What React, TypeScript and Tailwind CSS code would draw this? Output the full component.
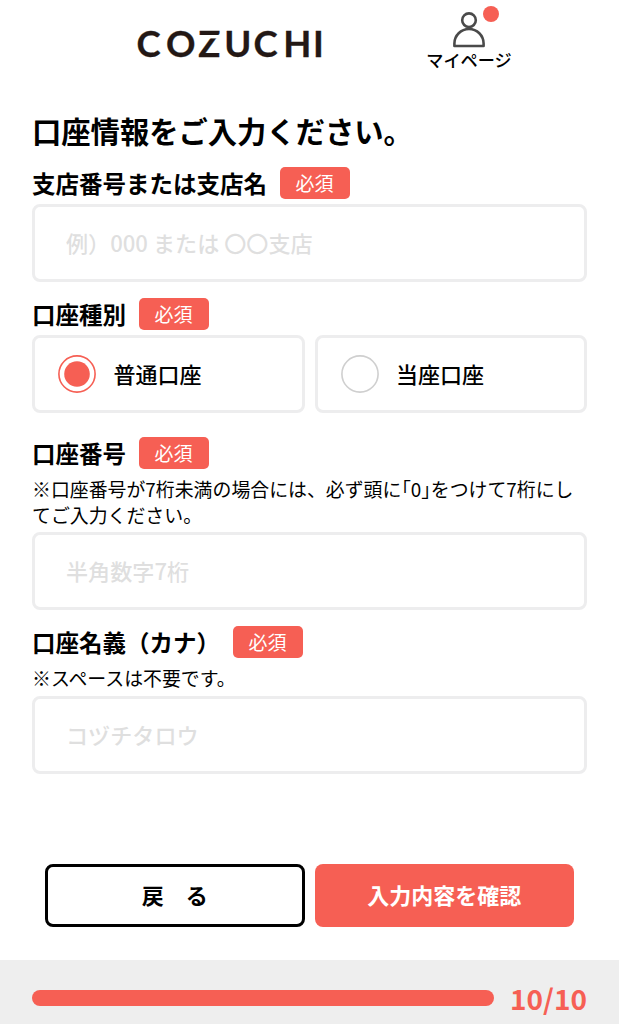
import { useState, type ReactNode } from 'react';

type AccountType = 'ordinary' | 'current';

const accountTypes: { value: AccountType; label: string }[] = [
  { value: 'ordinary', label: '普通口座' },
  { value: 'current', label: '当座口座' },
];

function Logo() {
  return (
    <svg className="h-12 w-[200px]" viewBox="0 0 200 48" role="img" aria-label="COZUCHI">
      <text
        x="6.4 35.9 68.2 94.2 123.6 153.3 183"
        y="37.2"
        className="fill-[#231815] stroke-[#231815] font-['Lato',sans-serif] text-[36.5px] font-bold [stroke-width:0.3px]"
      >
        COZUCHI
      </text>
      {/* gap under the top bar of the Z */}
      <rect x="68" y="15" width="24" height="3.4" fill="#fff" />
    </svg>
  );
}

function MyPageLink() {
  return (
    <a href="#" className="relative flex w-[88px] flex-col items-center">
      <svg className="h-[38px] w-9" viewBox="0 0 36 38" fill="none" stroke="#4a4a4a" strokeWidth="2.6">
        <circle cx="18" cy="10.2" r="6.8" />
        <path d="M3.4 36V33.6a14.6 14.6 0 0 1 29.2 0V36Z" strokeLinejoin="round" />
      </svg>
      <span className="absolute top-[-4px] right-[14px] size-4 rounded-full bg-[#f65f54]" />
      <span className="text-[17.2px] leading-6 font-medium whitespace-nowrap">マイページ</span>
    </a>
  );
}

function FieldLabel({ children }: { children: ReactNode }) {
  return (
    <div className="flex h-8 items-center gap-[12.5px]">
      <h2 className="text-[23.5px] leading-8 font-bold whitespace-nowrap">{children}</h2>
      <span className="h-8 w-[70px] rounded-[5px] bg-[#f65f54] text-center text-[19px] leading-8 text-white">
        必須
      </span>
    </div>
  );
}

function TextField({ placeholder }: { placeholder: string }) {
  return (
    <input
      type="text"
      placeholder={placeholder}
      className="block h-[78px] w-full rounded-lg border-[3px] border-[#ededee] bg-white px-[31px] pb-[2px] text-[22.1px] font-medium text-black outline-none placeholder:text-[#dfdfdf] placeholder:opacity-100"
    />
  );
}

function RadioMark({ checked }: { checked: boolean }) {
  return (
    <svg className="size-[38px]" viewBox="0 0 38 38" fill="none">
      <circle cx="19" cy="19" r="18.1" stroke={checked ? '#f65f54' : '#cfcfcf'} strokeWidth="1.6" />
      {checked && <circle cx="19" cy="19" r="12.8" fill="#f65f54" />}
    </svg>
  );
}

export default function App() {
  const [accountType, setAccountType] = useState<AccountType>('ordinary');

  return (
    <div className="flex h-[1024px] w-full flex-col bg-white font-['Noto_Sans_CJK_JP',sans-serif] text-black">
      <header className="flex h-[109px] items-start pt-[10px] pl-[130px]">
        <div className="mt-[10px]">
          <Logo />
        </div>
        <div className="ml-[95px]">
          <MyPageLink />
        </div>
      </header>

      <main className="flex-1 px-8">
        <h1 className="mb-[15px] text-[29.3px] leading-[43px] font-bold">口座情報をご入力ください。</h1>

        <section>
          <FieldLabel>支店番号または支店名</FieldLabel>
          <div className="mt-[5px]">
            <TextField placeholder="例）000 または 〇〇支店" />
          </div>
        </section>

        <section className="mt-4">
          <FieldLabel>口座種別</FieldLabel>
          <div className="mt-[5px] grid grid-cols-2 gap-[10px]">
            {accountTypes.map(({ value, label }) => (
              <button
                key={value}
                type="button"
                role="radio"
                aria-checked={accountType === value}
                onClick={() => setAccountType(value)}
                className="flex h-[78px] items-center gap-[17.5px] rounded-lg border-[3px] border-[#ededee] pl-[23px]"
              >
                <RadioMark checked={accountType === value} />
                <span className="pb-[2px] text-[22px] leading-8 font-medium">{label}</span>
              </button>
            ))}
          </div>
        </section>

        <section className="mt-6">
          <FieldLabel>口座番号</FieldLabel>
          <p className="mt-[7px] mb-[5px] text-[18.9px] leading-[25.5px]">
            ※口座番号が7桁未満の場合には、必ず頭に｢0｣をつけて7桁にしてご入力ください。
          </p>
          <TextField placeholder="半角数字7桁" />
        </section>

        <section className="mt-4">
          <FieldLabel>口座名義（カナ）</FieldLabel>
          <p className="mt-[7px] mb-[5px] text-[18.9px] leading-[25.5px]">※スペースは不要です。</p>
          <TextField placeholder="コヅチタロウ" />
        </section>

        <div className="mt-[90px] grid grid-cols-2 gap-[10px] px-[13px]">
          <button type="button" className="h-[63px] rounded-lg border-[3px] border-black pb-[2px] text-[22px] font-bold">
            戻　る
          </button>
          <button type="button" className="h-[63px] rounded-lg bg-[#f65f54] pb-[2px] text-[22px] font-bold text-white">
            入力内容を確認
          </button>
        </div>
      </main>

      <footer className="flex h-16 items-center gap-4 bg-[#eee] px-8 pt-[12px]">
        <div className="h-4 flex-1 rounded-full bg-[#f65f54]" />
        <span className="text-[28px] leading-8 font-bold text-[#f65f54]">10/10</span>
      </footer>
    </div>
  );
}
